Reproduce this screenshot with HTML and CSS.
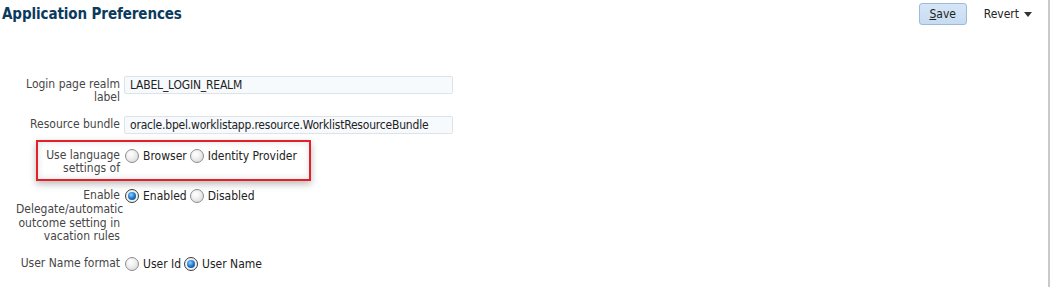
FILE: index.html
```html
<!DOCTYPE html>
<html>
<head>
<meta charset="utf-8">
<link rel="stylesheet" href="styles.css">
</head>
<body>
<div class="page">
  <div class="header">
    <h1 class="title">Application Preferences</h1>
    <div class="actions">
      <button class="btn-save"><u>S</u>ave</button>
      <span class="revert">Revert <span class="caret"></span></span>
    </div>
  </div>
  <div class="form">
    <div class="row row-1">
      <div class="label">Login page realm label</div>
      <div class="field"><div class="input">LABEL_LOGIN_REALM</div></div>
    </div>
    <div class="row row-2">
      <div class="label">Resource bundle</div>
      <div class="field"><div class="input">oracle.bpel.worklistapp.resource.WorklistResourceBundle</div></div>
    </div>
    <div class="row row-3">
      <div class="label">Use language settings of</div>
      <div class="field radios">
        <span class="radio"></span><span class="opt">Browser</span>
        <span class="radio"></span><span class="opt">Identity Provider</span>
      </div>
    </div>
    <div class="row row-4">
      <div class="label">Enable Delegate/automatic outcome setting in vacation rules</div>
      <div class="field radios">
        <span class="radio on"></span><span class="opt">Enabled</span>
        <span class="radio"></span><span class="opt">Disabled</span>
      </div>
    </div>
    <div class="row row-5">
      <div class="label">User Name format</div>
      <div class="field radios">
        <span class="radio"></span><span class="opt">User Id</span>
        <span class="radio on"></span><span class="opt">User Name</span>
      </div>
    </div>
  </div>
  <div class="highlight"></div>
</div>
</body>
</html>
```

FILE: styles.css
```css
html, body {
  margin: 0;
  padding: 0;
  background: #fff;
}
body {
  font-family: "DejaVu Sans Condensed", "DejaVu Sans", sans-serif;
  font-size: 12px;
  color: #333;
}
.page {
  position: relative;
  width: 1048px;
  height: 287px;
  border-right: 2px solid #c9c9c9;
  box-sizing: content-box;
}
.header {
  display: flex;
  justify-content: space-between;
  align-items: flex-start;
  height: 40px;
}
.title {
  margin: 5px 0 0 2px;
  font-size: 15px;
  font-weight: bold;
  color: #0b3a5e;
  letter-spacing: -0.1px;
}
.actions {
  display: flex;
  align-items: center;
  margin-top: 3px;
  margin-right: 16px;
}
.btn-save {
  font-family: inherit;
  font-size: 12px;
  color: #222;
  width: 48px;
  height: 22px;
  padding: 0;
  border: 1px solid #9dbbd9;
  border-radius: 3px;
  background: linear-gradient(#d6e6f7, #c7dcf1);
}
.btn-save u { text-decoration: underline; }
.revert {
  margin-left: 17px;
  color: #222;
  display: flex;
  align-items: center;
}
.caret {
  display: inline-block;
  margin-left: 5px;
  width: 0;
  height: 0;
  border-left: 4px solid transparent;
  border-right: 4px solid transparent;
  border-top: 5px solid #333;
}
.form {
  display: flex;
  flex-direction: column;
  padding-top: 36px;
}
.row {
  display: flex;
  align-items: flex-start;
}
.label {
  width: 104px;
  margin-left: 16px;
  text-align: right;
  color: #464646;
  line-height: 13px;
  padding-top: 2px;
}
.field {
  margin-left: 4px;
}
.input {
  box-sizing: border-box;
  width: 329px;
  height: 18px;
  border: 1px solid #dde3e9;
  border-radius: 2px;
  background: #f6fafd;
  color: #222;
  padding: 0 5px;
  line-height: 16px;
  white-space: nowrap;
  letter-spacing: -0.2px;
}
.row-2 { margin-top: 12px; }
.row-3 { margin-top: 15px; }
.row-3 .label, .row-4 .label, .row-5 .label { padding-top: 0; }
.row-4 { margin-top: 14px; }
.row-4 .label { line-height: 13.8px; }
.row-5 { margin-top: 13px; }
.radios {
  display: flex;
  align-items: center;
  height: 13px;
  margin-top: 0;
}
.radio {
  box-sizing: border-box;
  width: 14px;
  height: 14px;
  border-radius: 50%;
  border: 1px solid #8e8e8e;
  background: radial-gradient(circle at 40% 35%, #ffffff 0%, #eeeeee 45%, #cfcfcf 100%);
  margin-left: 1px;
  position: relative;
  flex: none;
}
.radio.on {
  border-color: #3b3b3b;
  background: radial-gradient(circle at 50% 50%, #fff 0%, #e8e8e8 100%);
}
.radio.on::after {
  content: "";
  position: absolute;
  left: 2px;
  top: 2px;
  width: 8px;
  height: 8px;
  border-radius: 50%;
  background: radial-gradient(circle at 40% 35%, #8fd0ff 0%, #1c78c9 50%, #0a3a78 100%);
}
.opt {
  margin-left: 4px;
  margin-right: 2px;
  color: #222;
}
.highlight {
  position: absolute;
  left: 36px;
  top: 140px;
  width: 275px;
  height: 41px;
  box-sizing: border-box;
  border: 2px solid #e3202a;
  box-shadow: 0 3px 7px rgba(0,0,0,0.28), inset 0 0 7px rgba(0,0,0,0.12);
  pointer-events: none;
}
```
